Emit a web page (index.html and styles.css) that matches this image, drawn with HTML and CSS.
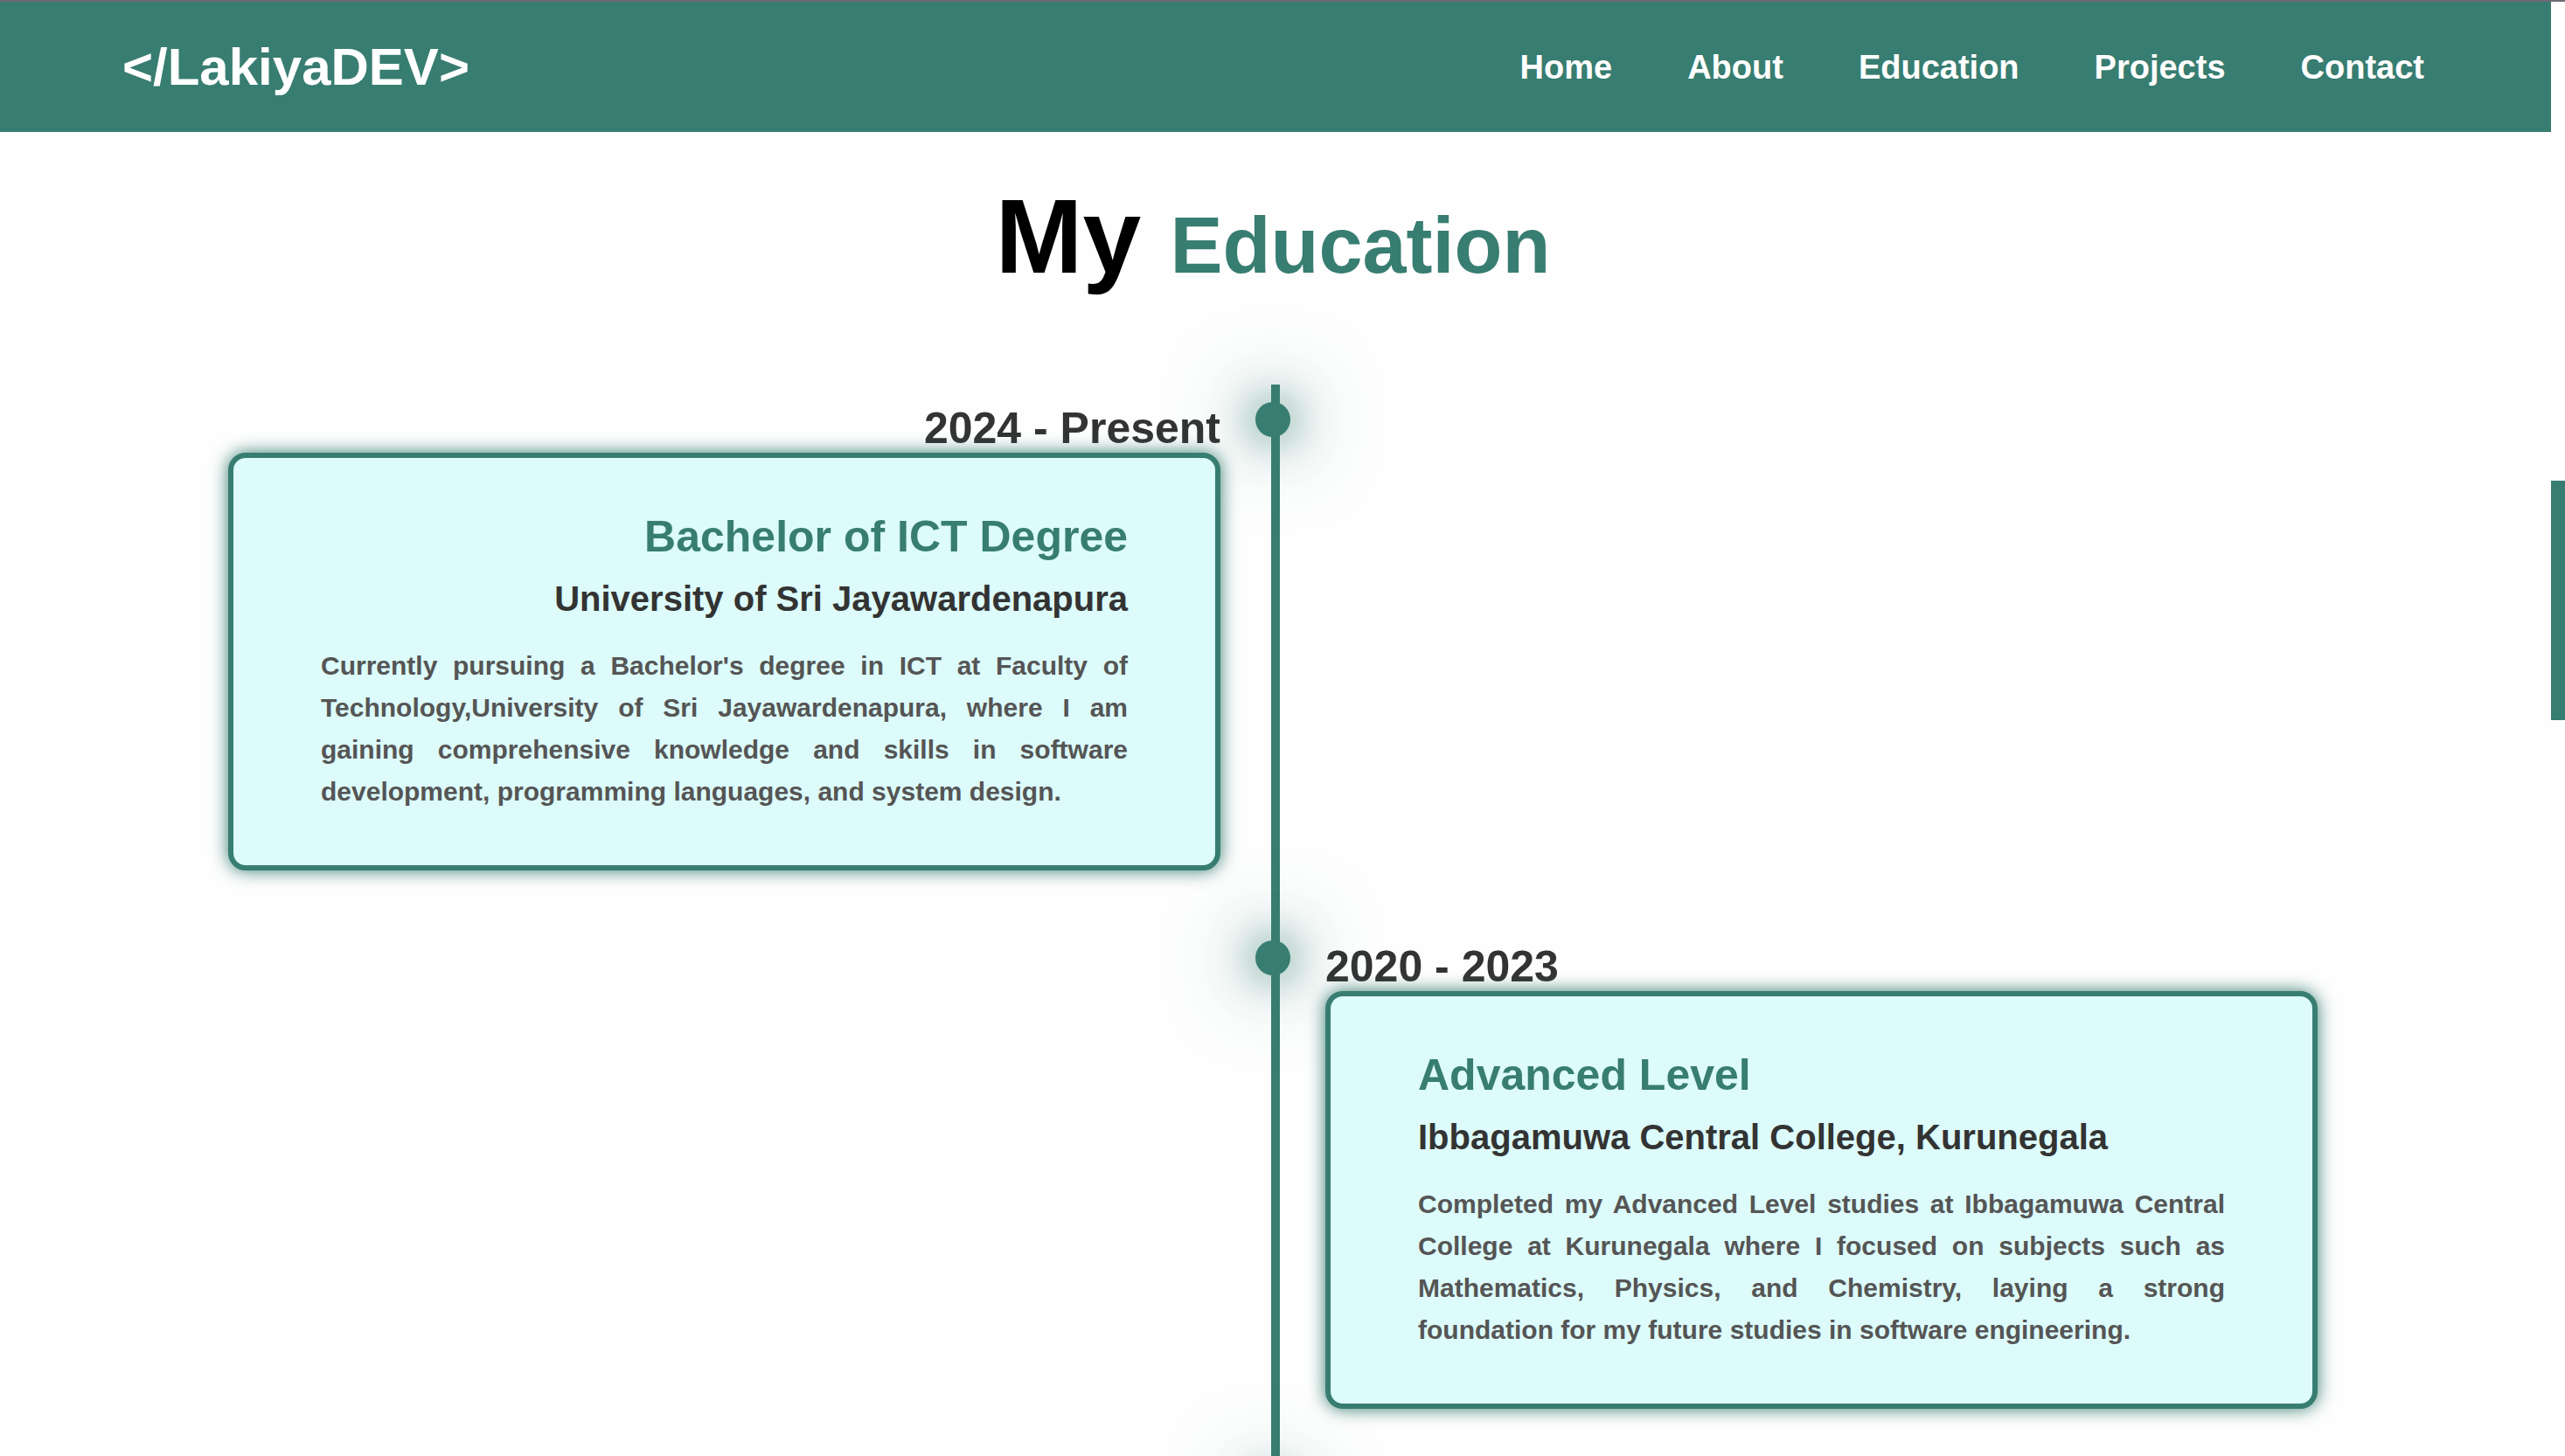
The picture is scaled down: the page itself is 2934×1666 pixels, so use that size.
FILE: index.html
```html
<!DOCTYPE html>
<html lang="en">
<head>
  <meta charset="utf-8">
  <meta name="viewport" content="width=device-width, initial-scale=1">
  <title>LakiyaDEV</title>
  <link rel="stylesheet" href="styles.css">
</head>
<body>
  <div class="layout">
    <div class="page">
      <header class="header">
        <a class="logo" href="#home">&lt;/LakiyaDEV&gt;</a>
        <nav class="nav">
          <a href="#home">Home</a>
          <a href="#about">About</a>
          <a href="#education">Education</a>
          <a href="#projects">Projects</a>
          <a href="#contact">Contact</a>
        </nav>
      </header>
      <main class="education" id="education">
        <h1 class="heading">My <span>Education</span></h1>
        <div class="timeline">
          <section class="item item-left">
            <span class="dot"></span>
            <div class="entry">
              <p class="date">2024 - Present</p>
              <article class="card">
                <h2>Bachelor of ICT Degree</h2>
                <h3>University of Sri Jayawardenapura</h3>
                <p>Currently pursuing a Bachelor's degree in ICT at Faculty of Technology,University of Sri Jayawardenapura, where I am gaining comprehensive knowledge and skills in software development, programming languages, and system design.</p>
              </article>
            </div>
          </section>
          <section class="item item-right">
            <span class="dot"></span>
            <div class="entry">
              <p class="date">2020 - 2023</p>
              <article class="card">
                <h2>Advanced Level</h2>
                <h3>Ibbagamuwa Central College, Kurunegala</h3>
                <p>Completed my Advanced Level studies at Ibbagamuwa Central College at Kurunegala where I focused on subjects such as Mathematics, Physics, and Chemistry, laying a strong foundation for my future studies in software engineering.</p>
              </article>
            </div>
          </section>
          <section class="item item-left">
            <span class="dot"></span>
          </section>
        </div>
      </main>
    </div>
    <div class="scroll-track"><div class="scroll-thumb"></div></div>
  </div>
</body>
</html>
```
FILE: styles.css
```css
:root {
  --main: #387d71;
  --page: #fefefe;
  --card: #dcfbfa;
}

* {
  box-sizing: border-box;
  margin: 0;
  padding: 0;
}

html {
  height: 100%;
  overflow: hidden;
}

body {
  height: 100%;
  overflow: hidden;
  border-top: 2px solid #6b6b76;
  background: var(--page);
  font-family: "Liberation Sans", Helvetica, Arial, sans-serif;
  font-weight: 700;
}

.layout {
  display: flex;
  height: 100%;
  overflow: hidden;
}

.page {
  flex: 1;
}

.header {
  display: flex;
  align-items: center;
  justify-content: space-between;
  padding: 40px 145px 40px 140px;
  background: var(--main);
}

.header a {
  color: #fff;
  text-decoration: none;
}

.logo {
  font-size: 60px;
  line-height: 69px;
}

.nav {
  display: flex;
  gap: 86px;
  font-size: 38px;
  line-height: 44px;
}

.education {
  padding: 49px 267px 0 261px;
}

.heading {
  margin-bottom: 100px;
  color: #000;
  font-size: 120px;
  line-height: 140px;
  text-align: center;
}

.heading span {
  color: var(--main);
  font-size: 90px;
  line-height: 100px;
}

.timeline {
  position: relative;
  display: flex;
  flex-direction: column;
  gap: 80px;
  padding: 20px 0;
}

.timeline::before {
  content: "";
  position: absolute;
  top: 0;
  bottom: 0;
  left: calc(50% - 2px);
  width: 10px;
  background: var(--main);
}

.item {
  position: relative;
  display: grid;
  grid-template-columns: 1fr 1fr;
  column-gap: 120px;
  min-height: 40px;
}

.dot {
  position: absolute;
  top: 0;
  left: calc(50% - 20px);
  width: 40px;
  height: 40px;
  border-radius: 50%;
  background: var(--main);
  box-shadow: 0 0 50px var(--main), 0 0 100px var(--main);
}

.item-left .entry {
  grid-column: 1;
  text-align: right;
}

.item-right .entry {
  grid-column: 2;
}

.date {
  padding-top: 2px;
  color: #333;
  font-size: 50px;
  line-height: 56px;
}

.card {
  position: relative;
  padding: 60px 100px;
  border: 6px solid var(--main);
  border-radius: 20px;
  background: var(--card);
  box-shadow: 0 0 20px var(--main);
}

.card h2 {
  margin-bottom: 18px;
  color: var(--main);
  font-size: 50px;
  line-height: 60px;
}

.card h3 {
  margin-bottom: 30px;
  color: #333;
  font-size: 40px;
  line-height: 46px;
}

.card p {
  color: #555;
  font-size: 30px;
  line-height: 48px;
  text-align: justify;
}

.scroll-track {
  width: 16px;
}

.scroll-thumb {
  height: 274px;
  margin-top: 548px;
  background: var(--main);
}
```
